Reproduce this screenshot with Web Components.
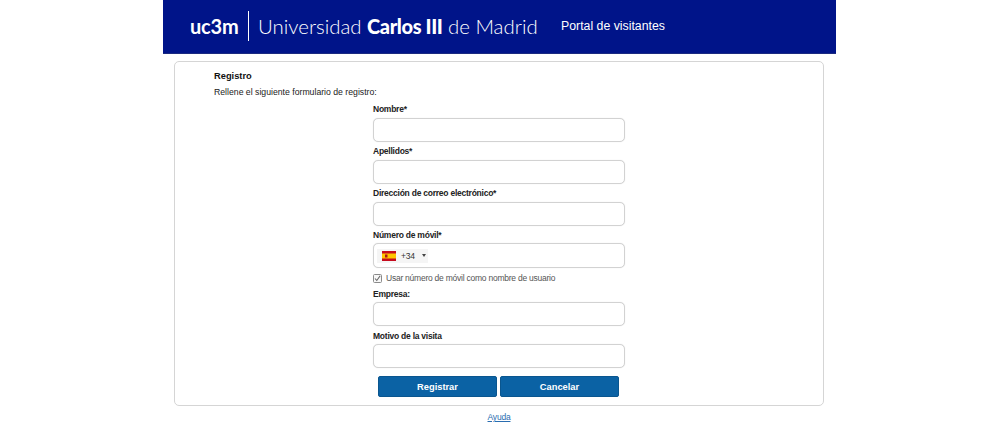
<!DOCTYPE html>
<html lang="es">
<head>
<meta charset="utf-8">
<title>Portal de visitantes</title>
<style>
html, body { margin: 0; padding: 0; background: #fff; }
body { font-family: "Liberation Sans", Arial, sans-serif; color: #111; height: 428px; overflow: hidden; }
</style>
</head>
<body>
<visitor-page></visitor-page>
<script>
class SiteHeader extends HTMLElement {
    constructor() {
        super();
        this.attachShadow({ mode: 'open' });
        this.shadowRoot.innerHTML = `
            <style>
                :host { display: flex; align-items: center; width: 673px; height: 54px; margin: 0 0 0 163px; background: #001489; color: #fff; box-sizing: border-box; padding: 0 0 2px 27px; border-bottom: 1px solid #1b2a80; }
                .uc3m { font: 700 20px Lato, "Liberation Sans", sans-serif; letter-spacing: -0.2px; width: 50px; }
                .bar { width: 1px; height: 30px; background: #fff; margin: 0 9px 0 8px; }
                .name { font: 300 20.4px Lato, "Liberation Sans", sans-serif; white-space: nowrap; width: 303px; }
                .name b { font-weight: 900; font-size: 20px; letter-spacing: -0.4px; }
                .portal { font: 12.3px "Liberation Sans", Arial, sans-serif; }
            </style>
            <span class="uc3m">uc3m</span><span class="bar"></span>
            <span class="name">Universidad <b>Carlos III</b> de Madrid</span>
            <span class="portal">Portal de visitantes</span>
        `;
    }
}
customElements.define('site-header', SiteHeader);

class FormField extends HTMLElement {
    constructor() {
        super();
        this.attachShadow({ mode: 'open' });
        this.shadowRoot.innerHTML = `
            <style>
                :host { display: block; }
                label { display: block; box-sizing: border-box; font: 700 8.5px/11px "Liberation Sans", Arial, sans-serif; letter-spacing: -0.24px; color: #222; height: 12px; padding-top: var(--label-shift, 1px); margin-bottom: var(--label-gap, 3px); }
                .box { display: flex; align-items: center; height: var(--box-height, 24px); box-sizing: border-box; border: 1px solid #d2d2d2; border-radius: 5px; background: #fff; padding-left: 3px; box-shadow: 0 0 1px #ddd; }
            </style>
            <label></label>
            <div class="box"><slot></slot></div>
        `;
        this.shadowRoot.querySelector('label').textContent = this.getAttribute('label');
    }
}
customElements.define('form-field', FormField);

class PhonePrefix extends HTMLElement {
    constructor() {
        super();
        this.attachShadow({ mode: 'open' });
        this.shadowRoot.innerHTML = `
            <style>
                :host { display: flex; align-items: center; width: 51px; height: 14px; background: #f5f5f5; box-sizing: border-box; padding-left: 5px; font: 8.5px "Liberation Sans", Arial, sans-serif; letter-spacing: -0.2px; color: #333; }
                svg { display: block; margin-right: 5px; }
                .arrow { width: 0; height: 0; border: 2px solid transparent; border-top: 3px solid #444; border-bottom: 0; margin-left: 7px; }
            </style>
            <svg width="14" height="10" viewBox="0 0 14 10">
                <rect width="14" height="10" fill="#c60b1e"/>
                <rect y="2.5" width="14" height="5" fill="#ffc400"/>
                <rect x="3" y="3.5" width="2.5" height="3" fill="#ad1519"/>
            </svg>
            <span>+34</span><span class="arrow"></span>
        `;
    }
}
customElements.define('phone-prefix', PhonePrefix);

class CheckRow extends HTMLElement {
    constructor() {
        super();
        this.attachShadow({ mode: 'open' });
        this.shadowRoot.innerHTML = `
            <style>
                :host { display: flex; align-items: center; height: 14px; gap: 4px; font: 8.5px "Liberation Sans", Arial, sans-serif; letter-spacing: -0.24px; color: #555; }
                svg { display: block; }
            </style>
            <svg width="9" height="9" viewBox="0 0 9 9">
                <rect x="0.5" y="0.5" width="8" height="8" rx="1" fill="#f8f8f8" stroke="#8a8a8a"/>
                <path d="M2 4.5 L3.8 6.5 L7.2 1.8" fill="none" stroke="#666" stroke-width="1.1"/>
            </svg>
            <slot></slot>
        `;
    }
}
customElements.define('check-row', CheckRow);

class ActionButton extends HTMLElement {
    constructor() {
        super();
        this.attachShadow({ mode: 'open' });
        this.shadowRoot.innerHTML = `
            <style>
                :host { display: flex; align-items: center; justify-content: center; width: 119px; height: 21px; box-sizing: border-box; background: #0b62a4; border: 1px solid #0a568f; border-radius: 2px; color: #fff; font: 700 9.3px "Liberation Sans", Arial, sans-serif; }
            </style>
            <slot></slot>
        `;
    }
}
customElements.define('action-button', ActionButton);

class RegisterCard extends HTMLElement {
    constructor() {
        super();
        this.attachShadow({ mode: 'open' });
        this.shadowRoot.innerHTML = `
            <style>
                :host { display: block; width: 650px; height: 345px; margin: 7px 0 0 174px; box-sizing: border-box; border: 1px solid #d5d5d5; border-radius: 5px; padding: 7px 0 0 39px; }
                h1 { font: 700 9.3px/14px "Liberation Sans", Arial, sans-serif; margin: 0 0 3px; color: #111; }
                p { font: 8.7px/12px "Liberation Sans", Arial, sans-serif; margin: 0; color: #222; }
                .form { display: flex; flex-direction: column; width: 252px; margin: 5px 0 0 159px; }
                .form > * { margin-bottom: 3px; }
                .phone { --label-gap: 2px; --box-height: 25px; }
                .company { --label-gap: 1px; --label-shift: 0px; margin-top: 1px; }
                .reason { --label-gap: 2px; margin-top: 1px; }
                .actions { display: flex; gap: 3px; margin: 5px 0 0 5px; }
            </style>
            <h1>Registro</h1>
            <p>Rellene el siguiente formulario de registro:</p>
            <div class="form">
                <form-field label="Nombre*"></form-field>
                <form-field label="Apellidos*"></form-field>
                <form-field label="Dirección de correo electrónico*"></form-field>
                <form-field class="phone" label="Número de móvil*"><phone-prefix></phone-prefix></form-field>
                <check-row>Usar número de móvil como nombre de usuario</check-row>
                <form-field class="company" label="Empresa:"></form-field>
                <form-field class="reason" label="Motivo de la visita"></form-field>
                <div class="actions">
                    <action-button>Registrar</action-button>
                    <action-button>Cancelar</action-button>
                </div>
            </div>
        `;
    }
}
customElements.define('register-card', RegisterCard);

class VisitorPage extends HTMLElement {
    constructor() {
        super();
        this.attachShadow({ mode: 'open' });
        this.shadowRoot.innerHTML = `
            <style>
                :host { display: block; }
                .help { display: block; width: 650px; margin: 5px 0 0 174px; text-align: center; font: 8.5px/12px "Liberation Sans", Arial, sans-serif; letter-spacing: -0.2px; color: #2a6db0; text-decoration: underline; }
            </style>
            <site-header></site-header>
            <register-card></register-card>
            <a class="help">Ayuda</a>
        `;
    }
}
customElements.define('visitor-page', VisitorPage);
</script>
</body>
</html>
